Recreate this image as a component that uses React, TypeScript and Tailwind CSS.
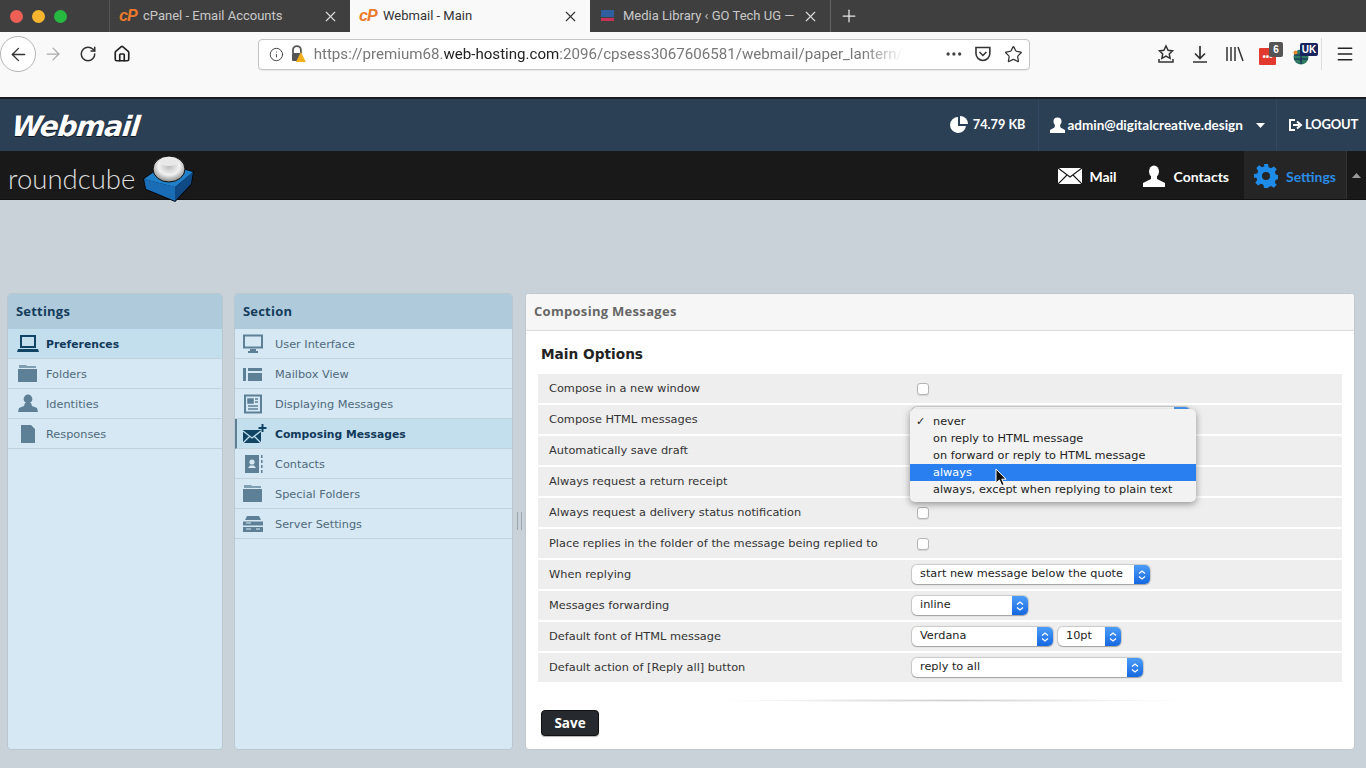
import React from 'react';
import { ArrowLeft, ArrowRight, Home, Info, Menu, MoreHorizontal, Plus, RotateCw, Star, X } from 'lucide-react';

const uiFont = "font-['DejaVu_Sans',sans-serif]";
const headFont = "font-['Open_Sans',sans-serif]";

const CpIcon = () => (
  <span className="w-[19px] shrink-0 font-['Liberation_Sans',sans-serif] text-[16px] font-bold italic leading-none tracking-[-1px] text-[#ea7a2b]">cP</span>
);

const BrowserTab = ({ title, active, icon }: { title: string; active?: boolean; icon: React.ReactNode }) => (
  <div className={`flex h-8 w-[240px] items-center pl-[9px] pr-[11px] ${active ? 'bg-[#f9f9fa] text-[#333]' : 'text-[#c9c9c9]'}`}>
    {icon}
    <span className="ml-[5px] flex-1 truncate font-['Roboto',sans-serif] text-[13px]">{title}</span>
    <X size={17} strokeWidth={1.6} className={active ? 'text-[#333]' : 'text-[#ddd]'} />
  </div>
);

const SettingsRow = ({ icon, label, active, bar, wide }: { icon: React.ReactNode; label: string; active?: boolean; bar?: boolean; wide?: boolean }) => (
  <div className={`flex h-[30px] items-center border-b border-[#bfd2de] ${active ? 'bg-[#c3dfee]' : ''} ${bar ? 'border-l-[2px] border-l-[#5f7f92]' : ''}`}>
    <div className={`flex shrink-0 ${wide ? 'w-[40px] justify-start pl-[7px]' : 'w-[38px] justify-center pl-[2px]'} ${active ? 'text-[#0f4464]' : 'text-[#5d8096]'} ${bar ? '-ml-[2px]' : ''}`}>{icon}</div>
    <span className={`${uiFont} pt-[4px] ${active ? 'text-[10.8px] font-bold text-[#12395a]' : 'text-[11.3px] text-[#4f6a7c]'}`}>{label}</span>
  </div>
);

const ic = { width: 22, height: 20, viewBox: '0 0 22 20', fill: 'currentColor' };

const LaptopIcon = () => (
  <svg width="24" height="20" viewBox="0 0 22 20" fill="currentColor"><path d="M3 1h16v13H3z M5 3v9h12V3z" fillRule="evenodd" /><path d="M1 15h20l1 3H0z" /></svg>
);
const FolderIcon = () => (
  <svg {...ic}><path d="M2 1h7l1 1h9v2H2z" opacity=".7" /><path d="M1 5h19v13H1z" /></svg>
);
const PersonIcon = () => (
  <svg {...ic}><circle cx="11" cy="5" r="4.400" /><path d="M8 9h6l1 3 5 2 1 4H1l1-4 5-2z" /></svg>
);
const DocIcon = () => (
  <svg {...ic}><path d="M4 1h10l4 4v14H4z" /></svg>
);
const MonitorIcon = () => (
  <svg {...ic} fill="none" stroke="currentColor"><path d="M2 1.500h18v12H2z" strokeWidth="2" /><path d="M8 16h6M6 18h10" strokeWidth="2" /></svg>
);
const MailboxIcon = () => (
  <svg {...ic}><path d="M1 4h3v13H1zM6 4h14v3H6zM6 9h14v8H6z" /></svg>
);
const DisplayIcon = () => (
  <svg {...ic} fill="none" stroke="currentColor" strokeWidth="1.500"><path d="M3 1.500h16v17H3z" strokeWidth="2" /><path d="M6 5h5v4H6z" fill="currentColor" /><path d="M13 5h3M13 8h3M6 12h10M6 15h10" /></svg>
);
const ComposeIcon = () => (
  <svg width="26" height="20" viewBox="0 0 26 20" fill="currentColor">
    <path d="M1 6h18v13H1z" />
    <path d="M1 7l9 7 9-7M1 19l7-7M19 19l-7-7" fill="none" stroke="#c3dfee" strokeWidth="1.300" />
    <path d="M19.500 0h2v3h3v2h-3v3h-2V5h-3V3h3z" />
  </svg>
);
const ContactCardIcon = () => (
  <svg {...ic}>
    <path d="M3 1h14v18H3z" />
    <circle cx="10" cy="8" r="2.600" fill="#d6e8f3" />
    <path d="M6 14l2-2.500h4l2 2.500z" fill="#d6e8f3" />
    <path d="M19 1h1.500v3H19zM19 6h1.500v3H19zM19 11h1.500v3H19zM19 16h1.500v3H19z" />
  </svg>
);
const ServerIcon = () => (
  <svg {...ic}><path d="M5 2h12l2 4H3z" /><path d="M1 7.500h20v4H1zM1 13h20v5H1z" /><path d="M4 9h5M4 15h5M14 15h4" stroke="#d6e8f3" /></svg>
);

// native looking mac select
const MacSelect = ({ value, width }: { value: string; width: string }) => (
  <div className={`flex h-[19px] ${width} items-stretch overflow-hidden rounded-[5px] bg-white shadow-[0_0_1px_1px_rgba(0,0,0,0.16),0_1px_1px_rgba(0,0,0,0.2)]`}>
    <span className={`${uiFont} flex-1 pl-[8px] text-[11.3px] leading-[18px] text-[#222]`}>{value}</span>
    <span className="flex w-[16px] flex-col items-center justify-center gap-[2px] bg-gradient-to-b from-[#4c9df7] to-[#1467e0]">
      <svg width="8" height="4" viewBox="0 0 8 4" fill="none" stroke="#fff" strokeWidth="1.300"><path d="M1 3.500L4 1l3 2.500" /></svg>
      <svg width="8" height="4" viewBox="0 0 8 4" fill="none" stroke="#fff" strokeWidth="1.300"><path d="M1 .5L4 3l3-2.500" /></svg>
    </span>
  </div>
);

const Check = () => (
  <div className="h-[12px] w-[12px] rounded-[3px] border border-[#b4b4b4] bg-white shadow-[0_1px_1px_rgba(0,0,0,0.1)]" />
);

const OptionRow = ({ label, children }: { label: string; children?: React.ReactNode }) => (
  <div className="mb-[2px] flex h-[29px] items-center bg-[#eeeeee] pl-[11px]">
    <span className={`${uiFont} w-[368px] shrink-0 text-[11.35px] text-[#333]`}>{label}</span>
    {children}
  </div>
);

const HtmlPopup = () => (
  <div className={`${uiFont} absolute left-[372px] top-[4px] z-10 w-[286px] rounded-[5px] bg-[#f2f2f2] py-[4px] text-[11.3px] text-[#222] shadow-[0_2px_7px_rgba(0,0,0,0.4)]`}>
    <div className="flex h-[17px] pl-[6px] leading-[17px]"><span className="w-[17px] text-[11px] font-bold">✓</span>never</div>
    <div className="h-[17px] pl-[23px] leading-[17px]">on reply to HTML message</div>
    <div className="h-[17px] pl-[23px] leading-[17px]">on forward or reply to HTML message</div>
    <div className="h-[17px] bg-[#2a7ff0] pl-[23px] leading-[17px] text-white">always</div>
    <div className="h-[17px] pl-[23px] leading-[17px]">always, except when replying to plain text</div>
    <svg className="absolute left-[85px] top-[59px]" width="13" height="19" viewBox="0 0 13 19">
      <path d="M1 1v14l3.400-3 2.400 5.600 2.400-1-2.400-5.400H11z" fill="#111" stroke="#fff" strokeWidth="1" />
    </svg>
  </div>
);

const Cube = () => (
  <svg width="52" height="50" viewBox="0 0 52 50" className="-mb-[5px] ml-[8px] self-end">
    <defs>
      <radialGradient id="ball" cx="50%" cy="40%" r="60%">
        <stop offset="0%" stopColor="#bdbdbd" />
        <stop offset="55%" stopColor="#f2f2f2" />
        <stop offset="100%" stopColor="#8a8a8a" />
      </radialGradient>
    </defs>
    <path d="M1 25L22 10l28 8-2 12-16 17L3 35z" fill="#08223f" stroke="#000" strokeWidth="1.500" />
    <path d="M1 25L22 10l28 8-18 15z" fill="#1f7fc9" />
    <path d="M1 25l31 8v14L3 35z" fill="#1a6db5" />
    <path d="M32 33l18-15-2 12-16 17z" fill="#0f4a85" />
    <ellipse cx="26" cy="15" rx="16" ry="13" fill="url(#ball)" stroke="#111" strokeWidth="1" />
    <ellipse cx="26" cy="8" rx="9" ry="4" fill="#e8e8e8" />
  </svg>
);

const App = () => {
  return (
    <div className="flex h-[768px] w-[1366px] flex-col overflow-hidden bg-[#c9d1d9]">
      {/* browser tabs */}
      <div className="flex h-8 shrink-0 items-center bg-[#3f3f3f]">
        <div className="flex h-8 w-[110px] items-center gap-[9px] border-r border-[#555] pl-[10px]">
          <span className="h-[13px] w-[13px] rounded-full bg-[#ee5f56]" />
          <span className="h-[13px] w-[13px] rounded-full bg-[#f5b52e]" />
          <span className="h-[13px] w-[13px] rounded-full bg-[#27b83f]" />
        </div>
        <BrowserTab title="cPanel - Email Accounts" icon={<CpIcon />} />
        <BrowserTab title="Webmail - Main" active icon={<CpIcon />} />
        <BrowserTab
          title="Media Library ‹ GO Tech UG —"
          icon={
            <svg width="19" height="14" viewBox="0 0 19 14">
              <rect x="2" y="1" width="13" height="7" fill="#2f5f9f" />
              <rect x="2" y="9" width="13" height="3" fill="#c8325a" />
            </svg>
          }
        />
        <div className="flex h-8 w-[36px] items-center justify-center border-l border-[#666]">
          <Plus size={20} strokeWidth={1.500} className="text-[#e8e8e8]" />
        </div>
      </div>

      {/* browser toolbar */}
      <div className="h-[67px] shrink-0 border-b-2 border-[#1c1c1c] bg-[#f9f9fa]">
        <div className="flex h-[44px] items-center">
          <div className="flex h-[36px] w-[36px] items-center justify-center rounded-full border border-[#b5b5b5] bg-white">
            <ArrowLeft size={21} strokeWidth={1.600} className="text-[#333]" />
          </div>
          <ArrowRight size={20} strokeWidth={1.500} className="ml-[7px] text-[#aaa]" />
          <RotateCw size={18} strokeWidth={2} className="ml-[16px] text-[#333]" />
          <Home size={18} strokeWidth={2.200} className="ml-[16px] text-[#222]" />
          <div className="ml-[127px] flex h-[31px] w-[772px] items-center rounded-[4px] border border-[#c4c4c4] bg-white pl-[10px] pr-[6px] shadow-[0_1px_1px_rgba(0,0,0,0.06)]">
            <Info size={15} strokeWidth={1.600} className="text-[#444]" />
            <svg width="17" height="18" viewBox="0 0 17 18" className="ml-[6px]">
              <path d="M3 8V5a4 4 0 0 1 8 0v3" fill="none" stroke="#555" strokeWidth="1.800" />
              <rect x="2" y="8" width="10" height="8" rx="1" fill="#555" />
              <path d="M11 7l5 10H6z" fill="#f2b01e" />
            </svg>
            <div className="ml-[7px] w-[602px] overflow-hidden whitespace-nowrap font-['Roboto',sans-serif] text-[15.1px] text-[#777] [mask-image:linear-gradient(to_right,black_92%,transparent_99%)]">
              https://premium68.<span className="text-[#222]">web-hosting.com</span>:2096/cpsess3067606581/webmail/paper_lantern/
            </div>
            <MoreHorizontal size={20} className="ml-[34px] text-[#444]" />
            <svg width="18" height="18" viewBox="0 0 18 18" fill="none" stroke="#333" strokeWidth="1.600" className="ml-[11px]">
              <path d="M2 2.500h14v6a7 7 0 0 1-14 0z" />
              <path d="M5.500 7L9 10.500 12.500 7" />
            </svg>
            <Star size={19} strokeWidth={1.600} className="ml-[12px] text-[#333]" />
          </div>
          <svg width="18" height="20" viewBox="0 0 18 20" fill="none" stroke="#333" strokeWidth="1.500" className="ml-[127px]">
            <path d="M9 2l2.100 4.300 4.400.6-3.200 3 .8 4.400L9 12.200l-4.100 2.100.8-4.400-3.200-3 4.400-.6z" />
            <path d="M2 15v3h14v-3" />
          </svg>
          <svg width="18" height="20" viewBox="0 0 18 20" fill="none" stroke="#333" strokeWidth="1.700" className="ml-[16px]">
            <path d="M9 2v12M4 9.500L9 14.500l5-5M2 18h14" />
          </svg>
          <svg width="20" height="18" viewBox="0 0 20 18" stroke="#333" strokeWidth="1.500" className="ml-[16px]">
            <path d="M2 2v14M6 2v14M10 2v14M13 2l5 14" />
          </svg>
          <div className="relative ml-[14px] h-[21px] w-[18px]">
            <div className="absolute bottom-0 left-0 flex h-[17px] w-[17px] items-center justify-center rounded-[1px] bg-[#e23a2e] text-[9px] font-bold leading-none text-white">•••</div>
            <div className="absolute -right-[6px] -top-[2px] h-[15px] w-[14px] rounded-[2px] bg-[#555] text-center font-['Liberation_Sans',sans-serif] text-[10px] font-bold leading-[15px] text-white">6</div>
          </div>
          <div className="relative ml-[16px] h-[21px] w-[16px]">
            <svg width="16" height="16" viewBox="0 0 16 16" className="absolute bottom-0 left-0">
              <circle cx="8" cy="8" r="7.500" fill="#2f7a62" />
              <path d="M1 6h14M1 10h14M8 1v14" stroke="#17245e" strokeWidth="1.200" />
              <circle cx="2.500" cy="3.500" r="2" fill="#e8862a" />
            </svg>
            <div className="absolute -right-[9px] -top-[1px] h-[13px] w-[18px] rounded-[2px] bg-[#17245e] text-center font-['Liberation_Sans',sans-serif] text-[10px] font-bold leading-[13px] text-white">UK</div>
          </div>
          <div className="ml-[12px] h-[32px] w-px bg-[#ddd]" />
          <Menu size={20} strokeWidth={1.800} className="ml-[13px] text-[#222]" />
        </div>
      </div>

      {/* cpanel bar */}
      <div className="flex h-[52px] shrink-0 items-center bg-[#2b3f55] text-white">
        <div className="ml-[12px] mt-[3px] -skew-x-6 font-['DejaVu_Sans',sans-serif] text-[28px] font-bold italic leading-none tracking-[-1.200px] [text-shadow:0_1px_0_#0c1520,0_0_1px_#0c1520]">Webmail</div>
        <div className="ml-auto flex h-full items-center font-['Lato',sans-serif] text-[13px] font-bold">
          <div className="flex h-full items-center border-r border-[#34495f] pr-[13px]">
            <svg width="19" height="18" viewBox="0 0 19 18" fill="#fff">
              <path d="M8 1a8 8 0 1 0 8 9H8z" />
              <path d="M10 0a8 8 0 0 1 8 8h-8z" />
            </svg>
            <span className="ml-[4px] text-[12.7px]">74.79 KB</span>
          </div>
          <div className="flex h-full items-center border-r border-[#34495f] pl-[11px] pr-[11px]">
            <svg width="15" height="16" viewBox="0 0 15 16" fill="#fff">
              <circle cx="7.500" cy="4.500" r="4" />
              <path d="M5 8h5l.5 2.500L15 13v3H0v-3l4.500-2.500z" />
            </svg>
            <span className="ml-[2px] text-[13.5px]">admin@digitalcreative.design</span>
            <svg width="9" height="5" viewBox="0 0 9 5" fill="#fff" className="ml-[13px]"><path d="M0 0h9L4.500 5z" /></svg>
          </div>
          <div className="flex h-full items-center pl-[11px] pr-[8px]">
            <svg width="15" height="14" viewBox="0 0 15 14" fill="none" stroke="#fff" strokeWidth="2">
              <path d="M7 2H2v10h5" />
              <path d="M5 7h6M9 3.500L13 7l-4 3.500" />
            </svg>
            <span className="ml-[2px] tracking-[-0.2px]">LOGOUT</span>
          </div>
        </div>
      </div>

      {/* roundcube bar */}
      <div className="flex h-[49px] shrink-0 items-stretch border-b border-[#111] bg-[#191919] text-white">
        <div className="ml-[8px] flex items-center font-['Lato',sans-serif] text-[27.5px] font-light leading-none text-[#ddd]">
          <span className="mt-[7px]">roundcube</span>
          <Cube />
        </div>
        <div className={`ml-auto flex items-stretch ${uiFont} text-[13px] font-bold`}>
          <div className="flex items-center pt-[2px]">
            <svg width="24" height="18" viewBox="0 0 24 18" className="shrink-0">
              <path d="M0 1h24v16H0z" fill="#fff" />
              <path d="M0 1l12 9 12-9M0 17l9-9M24 17l-9-9" fill="none" stroke="#191919" strokeWidth="1.100" />
            </svg>
            <span className="ml-[7px] font-['Lato',sans-serif] text-[14px]">Mail</span>
            <svg width="22" height="22" viewBox="0 0 22 22" fill="#fff" className="ml-[26px]">
              <ellipse cx="11" cy="6.500" rx="5" ry="6" />
              <path d="M8 11h6v3l8 4v4H0v-4l8-4z" />
            </svg>
            <span className="ml-[9px] font-['Lato',sans-serif] text-[14px]">Contacts</span>
          </div>
          <div className="ml-[15px] flex w-[102px] items-center bg-[#252525] pl-[10px] pt-[2px] text-[#2b8ce6]">
            <svg width="24" height="24" viewBox="0 0 24 24" fill="#1f8be8">
              <path
                fillRule="evenodd"
                d="M10 0h4l.6 3.300 2.500 1 2.800-1.900 2.800 2.800-1.900 2.800 1 2.500 3.200.6v4l-3.200.6-1 2.500 1.900 2.800-2.800 2.800-2.800-1.900-2.500 1L14 24h-4l-.6-3.300-2.500-1-2.800 1.900-2.800-2.800 1.900-2.800-1-2.500L0 14v-4l3.200-.6 1-2.500-1.900-2.800 2.800-2.800 2.800 1.900 2.500-1zM12 8a4 4 0 1 0 0 8 4 4 0 0 0 0-8z"
              />
            </svg>
            <span className="ml-[8px] font-['Lato',sans-serif] text-[14px]">Settings</span>
          </div>
          <div className="flex w-[20px] items-center justify-center border-l border-[#333]">
            <svg width="9" height="5" viewBox="0 0 9 5" fill="#999"><path d="M0 5h9L4.500 0z" /></svg>
          </div>
        </div>
      </div>

      {/* panels */}
      <div className="flex flex-1 items-center pl-[7px] pr-[11px] pt-[93px] pb-[18px]">
        <div className="h-full w-[216px] shrink-0 overflow-hidden rounded-[4px] border border-[#bac8d2] bg-[#d6e8f3]">
          <div className={`${headFont} flex h-[35px] items-center bg-[#afcbdb] pl-[8px] text-[13px] font-bold tracking-[0.2px] text-[#153c5c]`}>Settings</div>
          <SettingsRow icon={<LaptopIcon />} label="Preferences" active />
          <SettingsRow icon={<FolderIcon />} label="Folders" />
          <SettingsRow icon={<PersonIcon />} label="Identities" />
          <SettingsRow icon={<DocIcon />} label="Responses" />
        </div>
        <div className="ml-[11px] h-full w-[279px] shrink-0 overflow-hidden rounded-[4px] border border-[#bac8d2] bg-[#d6e8f3]">
          <div className={`${headFont} flex h-[35px] items-center bg-[#afcbdb] pl-[8px] text-[13px] font-bold tracking-[0.2px] text-[#153c5c]`}>Section</div>
          <SettingsRow wide icon={<MonitorIcon />} label="User Interface" />
          <SettingsRow wide icon={<MailboxIcon />} label="Mailbox View" />
          <SettingsRow wide icon={<DisplayIcon />} label="Displaying Messages" />
          <SettingsRow wide icon={<ComposeIcon />} label="Composing Messages" active bar />
          <SettingsRow wide icon={<ContactCardIcon />} label="Contacts" />
          <SettingsRow wide icon={<FolderIcon />} label="Special Folders" />
          <SettingsRow wide icon={<ServerIcon />} label="Server Settings" />
        </div>
        <div className="flex h-full w-[12px] shrink-0 items-center justify-center">
          <div className="mt-[-1px] h-[18px] w-[5px] border-x border-[#9aa6ae]" />
        </div>
        <div className="h-full flex-1 overflow-hidden rounded-[4px] border border-[#c0c8ce] bg-white">
          <div className={`${headFont} flex h-[37px] items-center border-b border-[#dcdcdc] bg-[#f6f6f6] pl-[8px] text-[13px] font-bold tracking-[0.3px] text-[#666]`}>Composing Messages</div>
          <div className="pl-[12px] pr-[12px]">
            <h3 className={`${uiFont} mb-[11px] ml-[3px] mt-[15px] text-[13.7px] font-bold leading-[17px] text-[#222]`}>Main Options</h3>
            <OptionRow label="Compose in a new window"><Check /></OptionRow>
            <div className="relative">
              <OptionRow label="Compose HTML messages"><div className="-ml-[5px] -mt-[6px]"><MacSelect value="" width="w-[278px]" /></div></OptionRow>
              <OptionRow label="Automatically save draft" />
              <OptionRow label="Always request a return receipt" />
              <HtmlPopup />
            </div>
            <OptionRow label="Always request a delivery status notification"><Check /></OptionRow>
            <OptionRow label="Place replies in the folder of the message being replied to"><Check /></OptionRow>
            <OptionRow label="When replying"><div className="-ml-[5px]"><MacSelect value="start new message below the quote" width="w-[238px]" /></div></OptionRow>
            <OptionRow label="Messages forwarding"><div className="-ml-[5px]"><MacSelect value="inline" width="w-[116px]" /></div></OptionRow>
            <OptionRow label="Default font of HTML message">
              <div className="-ml-[5px] flex gap-[5px]">
                <MacSelect value="Verdana" width="w-[141px]" />
                <MacSelect value="10pt" width="w-[63px]" />
              </div>
            </OptionRow>
            <OptionRow label="Default action of [Reply all] button"><div className="-ml-[5px]"><MacSelect value="reply to all" width="w-[231px]" /></div></OptionRow>
            <div className="ml-[192px] mt-[17px] h-[3px] w-[445px] bg-[radial-gradient(ellipse_at_center,#cfcfcf_0%,#ffffff_72%)]" />
            <button className={`${headFont} ml-[3px] mt-[8px] h-[26px] w-[58px] rounded-[4px] border border-[#111] bg-[#26292d] text-[13.5px] font-bold text-white shadow-[0_1px_1px_rgba(0,0,0,0.3)]`}>Save</button>
          </div>
        </div>
      </div>
    </div>
  );
};

export default App;
